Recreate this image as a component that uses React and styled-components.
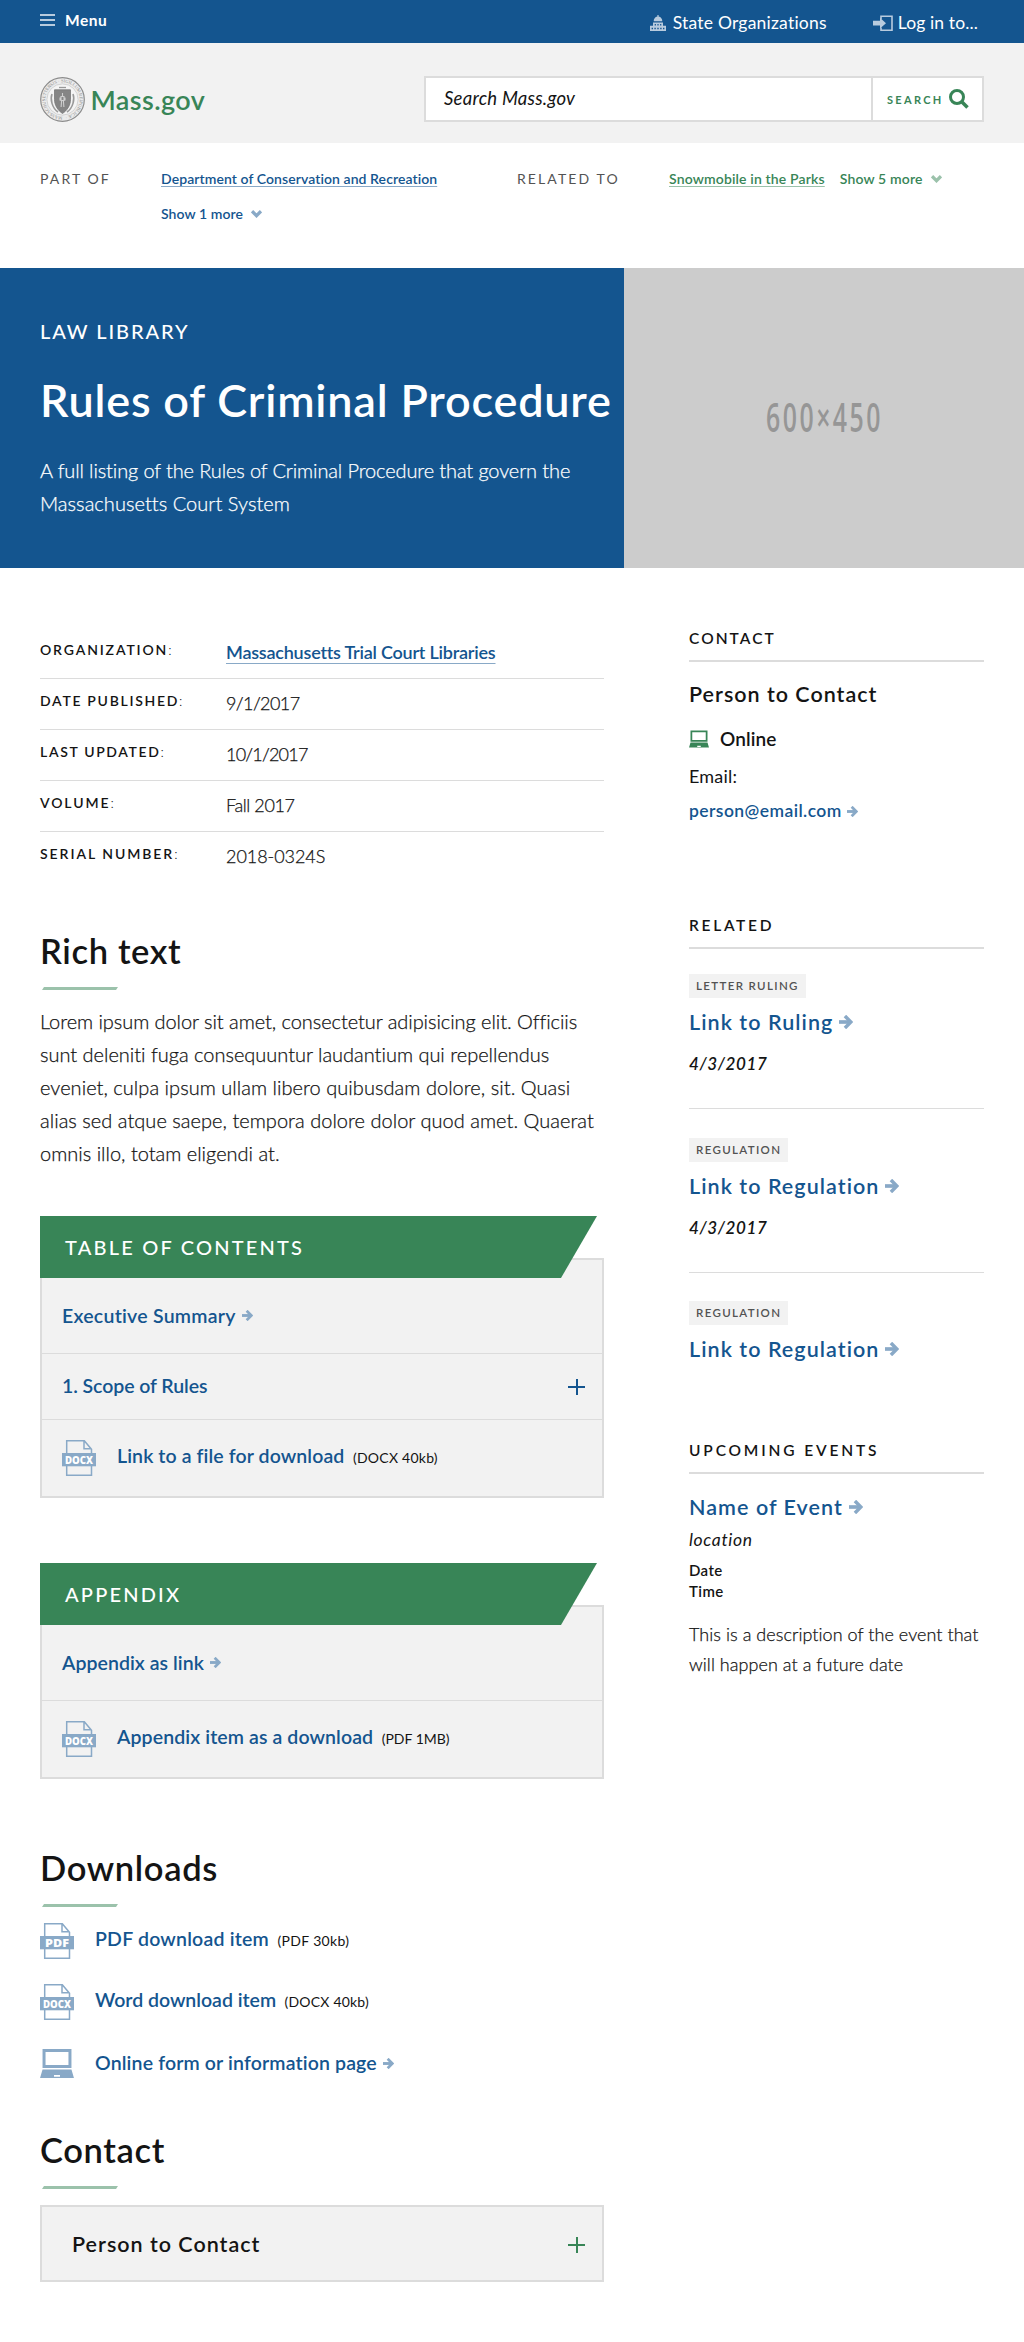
import React from "react";
import styled, { createGlobalStyle, css } from "styled-components";

const C = { blue: "#14558f", green: "#388557", ink: "#141414", gray: "#535353", line: "#dcdcdc", pale: "#f2f2f2", softBlue: "#89a9c7", softGreen: "#9bc2ab", onBlue: "#b8cbde" };

const Global = createGlobalStyle`
  * { box-sizing: border-box; }
  body { margin: 0; background: #fff; color: ${C.ink}; font-family: Lato, "Open Sans", sans-serif; font-variant-ligatures: none; }
  h1, h2, h3, p, dl, dt, dd { margin: 0; font-weight: inherit; }
  a { color: inherit; text-decoration: none; white-space: nowrap; }
  svg { display: block; flex: none; }
`;

const tracking = css`letter-spacing: ${(p) => p.$ls || 0}px;`;
const light = css`font-weight: 300; -webkit-text-stroke: 0.25px currentColor;`;

const TopBar = styled.div`
  display: flex; justify-content: space-between; align-items: flex-start;
  height: 43px; padding: 0 46px 0 40px; background: ${C.blue}; color: #fff;
`;
const MenuButton = styled.div`
  display: flex; align-items: center; gap: 10px; padding-top: 10px;
  font-size: 15.5px; line-height: 20px; font-weight: 700; letter-spacing: 0.5px;
`;
const Burger = styled.span`
  width: 15px; height: 12px; border-top: 2px solid ${C.onBlue}; border-bottom: 2px solid ${C.onBlue};
  display: flex; flex-direction: column; justify-content: center;
  &::after { content: ""; height: 2px; background: ${C.onBlue}; }
`;
const Utilities = styled.div`display: flex; gap: 46px; padding-top: 13px;`;
const Utility = styled.a`
  display: flex; align-items: center; gap: ${(p) => p.$gap}px; font-size: 17.5px; line-height: 20px; ${tracking}
`;

const Header = styled.header`
  display: flex; justify-content: space-between; align-items: flex-start;
  height: 100px; padding: 33px 40px 0; background: ${C.pale};
`;
const Logo = styled.a`display: flex; align-items: flex-start; gap: 5.5px; margin-top: 1px; color: ${C.green};`;
const LogoText = styled.span`margin-top: 7.5px; font-size: 27px; line-height: 30px; font-weight: 600; letter-spacing: 0.4px;`;
const Search = styled.div`display: flex; width: 560px; height: 46px; border: 2px solid ${C.line}; background: #fff;`;
const SearchField = styled.div`
  flex: 1; display: flex; align-items: center; padding: 0 0 2px 18px;
  font-size: 18.5px; font-style: italic; letter-spacing: 0.25px;
`;
const SearchButton = styled.div`
  display: flex; align-items: center; gap: 5px; width: 111px; padding-left: 14px; border-left: 2px solid ${C.line};
  color: ${C.green}; font-size: 11px; font-weight: 700; letter-spacing: 2.3px;
`;

const Relations = styled.div`display: flex; height: 125px; padding: 18px 40px 0; line-height: 35px;`;
const RelationGroup = styled.div`display: flex; width: ${(p) => p.$w}px; color: ${(p) => p.$color};`;
const RelationLabel = styled.div`width: ${(p) => p.$w}px; color: ${C.gray}; font-size: 14px; letter-spacing: 2.1px;`;
const RelationLinks = styled.div`
  display: flex; align-items: flex-start; flex-direction: ${(p) => (p.$stack ? "column" : "row")}; gap: ${(p) => (p.$stack ? 0 : 15)}px;
  font-size: 14px; font-weight: 600; ${tracking}
`;
const Underlined = styled.a`
  text-decoration: underline 1px ${(p) => p.$line}; text-underline-offset: ${(p) => p.$offset}px;
  text-decoration-skip-ink: none;
`;
const ShowMore = styled.a`display: flex; align-items: center; gap: 8px;`;

const Hero = styled.section`display: flex; height: 300px;`;
const HeroText = styled.div`width: 624px; padding: 50px 0 0 40px; background: ${C.blue}; color: #fff;`;
const Eyebrow = styled.div`font-size: 20px; line-height: 26px; font-weight: 500; letter-spacing: 1.9px;`;
const Title = styled.h1`margin-top: 29px; font-size: 45px; line-height: 54px; font-weight: 600; white-space: nowrap; letter-spacing: 0.8px;`;
const HeroCopy = styled.p`margin-top: 27px; font-size: 20px; line-height: 33px; ${light}`;
const TextLine = styled.span`display: block; white-space: nowrap; ${tracking}`;
const HeroImage = styled.div`flex: 1; display: flex; align-items: center; justify-content: center; background: #ccc;`;

const Columns = styled.main`display: flex; gap: 85px; padding: 0 40px 60px;`;
const Content = styled.div`width: 564px; padding-top: 60px;`;
const Sidebar = styled.aside`width: 295px; padding-top: 58px;`;

const DetailRow = styled.div`
  display: flex; height: 51px; padding-top: 12px; border-bottom: 1px solid ${C.line};
  &:last-child { border-bottom: 0; }
`;
const DetailLabel = styled.dt`width: 186px; font-size: 14px; line-height: 20px; font-weight: 600; ${tracking}`;
const Colon = styled.span`font-weight: 300;`;
const DetailValue = styled.dd`
  font-size: 18px; line-height: 24px; ${tracking}
  ${(p) => (p.$link ? css`font-weight: 600; color: ${C.blue};` : light)}
`;

const Heading = styled.h2`
  margin-top: ${(p) => p.$mt}px; font-size: 34.5px; line-height: 41px; font-weight: 600; letter-spacing: 0.65px;
  &::after {
    content: ""; display: block; width: 76px; height: 3px; margin: 16px 0 0 2px; background: ${C.softGreen};
    clip-path: polygon(2px 0, 100% 0, calc(100% - 2px) 100%, 0 100%);
  }
`;
const Paragraph = styled.p`margin-top: 15px; font-size: 20px; line-height: 33px; ${light}`;

const Panel = styled.section`margin-top: ${(p) => p.$mt}px;`;
const PanelTitle = styled.h3`
  position: relative; width: 557px; height: 62px; padding-left: 25px; margin-bottom: -20px; background: ${C.green}; color: #fff;
  font-size: 20px; line-height: 63px; letter-spacing: 2.2px; font-weight: 500;
  clip-path: polygon(0 0, 100% 0, 521px 100%, 0 100%);
`;
const PanelBody = styled.div`border: 2px solid ${C.line}; background: ${C.pale}; padding-top: 18px;`;
const PanelRow = styled.div`
  display: flex; align-items: center; height: ${(p) => p.$h}px; padding: 0 17px 0 20px; border-bottom: 1px solid ${C.line};
  &:last-child { border-bottom: 0; }
`;
const RowLink = styled.a`
  display: flex; align-items: center; gap: 6px; margin-top: ${(p) => p.$shift || 0}px;
  color: ${C.blue}; font-size: 19.5px; line-height: 24px; font-weight: 600; ${tracking}
`;
const FileSize = styled.span`margin-left: 8.5px; font-size: 14px; line-height: 24px; ${tracking}`;
const IconSlot = styled.div`width: 55px; display: flex;`;
const PlusMark = styled.i`
  width: 17px; height: 16px; margin-left: auto; margin-top: ${(p) => p.$shift || 0}px;
  background: linear-gradient(${(p) => p.$color} 0 0) center / 100% 2px no-repeat, linear-gradient(${(p) => p.$color} 0 0) center / 2px 100% no-repeat;
`;
const Downloads = styled.div`display: flex; flex-direction: column; gap: 25px; margin-top: 16px;`;
const DownloadRow = styled.div`display: flex; align-items: center; height: 36px;`;
const ContactBox = styled.div`
  display: flex; align-items: center; height: 77px; margin-top: 16px; padding: 0 17px 0 30px;
  border: 2px solid ${C.line}; background: ${C.pale};
`;
const PersonName = styled.h3`margin-top: ${(p) => p.$mt || 0}px; font-size: 21.5px; line-height: 26px; font-weight: 600; letter-spacing: 1px;`;

const SideHeading = styled.h2`
  margin-top: ${(p) => p.$mt || 0}px; padding-bottom: 10px; border-bottom: 2px solid ${C.line};
  font-size: 15.5px; line-height: 24px; font-weight: 600; ${tracking}
`;
const Channel = styled.div`display: flex; align-items: center; gap: 11px; margin-top: 20px; font-size: 19px; line-height: 24px; font-weight: 600; letter-spacing: 0.1px;`;
const FieldName = styled.div`margin-top: 13px; font-size: 18px; line-height: 24px; letter-spacing: 0.2px;`;
const EmailLink = styled.a`
  display: flex; align-items: center; gap: 5px; margin-top: 11px; color: ${C.blue};
  font-size: 17.5px; line-height: 24px; font-weight: 600; letter-spacing: 0.43px;
`;
const RelatedItem = styled.div`
  padding-bottom: 32px; border-bottom: 1px solid ${C.line}; margin-top: ${(p) => p.$mt}px;
  &:last-of-type { padding-bottom: 0; border-bottom: 0; }
`;
const Tag = styled.span`
  display: block; width: fit-content; height: 24px; padding: 0 7px; background: ${C.pale}; color: ${C.gray};
  font-size: 11.5px; line-height: 24px; font-weight: 600; letter-spacing: 1.35px;
`;
const SideLink = styled.a`
  display: flex; align-items: center; gap: 6px; margin-top: ${(p) => p.$mt || 11}px; color: ${C.blue};
  font-size: 21.5px; line-height: 26px; font-weight: 600; letter-spacing: 1.05px;
`;
const ItemDate = styled.div`margin-top: 17px; font-size: 17px; line-height: 24px; font-weight: 600; font-style: italic; letter-spacing: 0.6px;`;
const Place = styled.div`margin-top: 8px; font-size: 17.5px; line-height: 24px; font-style: italic; font-weight: 400; letter-spacing: 0.65px;`;
const When = styled.div`margin-top: 8px; font-size: 15px; line-height: 21px; font-weight: 600; letter-spacing: 0.4px;`;
const EventCopy = styled.p`margin-top: 17px; font-size: 18px; line-height: 30px; letter-spacing: 0.05px; ${light}`;

const Arrow = ({ size = 11 }) => (
  <svg width={size} height={size} viewBox="0 0 13 13" fill="none" stroke={C.softBlue}>
    <path d="M0 6.5H10.5" strokeWidth="3.4" />
    <path d="M5.5 .9 11 6.5 5.5 12.1" strokeWidth="3.2" />
  </svg>
);
const Chevron = ({ color }) => (
  <svg width="11" height="8" viewBox="0 0 11 8" fill="none" stroke={color} strokeWidth="3.3"><path d="M1 1.2 5.5 5.7 10 1.2" /></svg>
);
const Capitol = () => (
  <svg width="16" height="17" viewBox="0 0 16 17" fill={C.onBlue}>
    <path d="M7.4 0h1.2v1.6C11 2 12.3 4 12.3 6.2H3.7C3.7 4 5 2 7.4 1.6z" />
    <path fillRule="evenodd" d="M3 7.6h10v3.2h3V16H0v-5.2h3zM4.7 9v1.6h1.2V9zm2.7 0v1.6h1.2V9zm2.7 0v1.6h1.2V9zM1.6 12.8v1.5h1.4v-1.5zm2.8 0v1.5h1.4v-1.5zm2.9 0v1.5h1.4v-1.5zm2.9 0v1.5h1.4v-1.5zm2.8 0v1.5h1.4v-1.5z" />
  </svg>
);
const LoginIcon = () => (
  <svg width="20" height="17" viewBox="0 0 20 17">
    <path d="M8 4V1.2H19v14H8v-2.6" fill="none" stroke={C.onBlue} strokeWidth="1.6" />
    <path d="M0 5.8h7V2.8L13 8.2 7 13.6v-3H0z" fill={C.onBlue} />
  </svg>
);
const Magnifier = () => (
  <svg width="20" height="20" viewBox="0 0 20 20" fill="none" stroke={C.green}>
    <circle cx="8" cy="8" r="6.5" strokeWidth="3" /><path d="M12.5 12.5 18.5 18.5" strokeWidth="3.6" />
  </svg>
);
const Laptop = ({ color, width }) => (
  <svg width={width} height={width * 0.88} viewBox="0 0 34 30" fill={color}>
    <path fillRule="evenodd" d="M2.5 1h29v19h-29zM5.500 4v13h23V4z" />
    <path fillRule="evenodd" d="M2.5 21.5h29L34 30H0zM14 27v1.8h6V27z" />
  </svg>
);
const FileIcon = ({ label }) => (
  <svg width="34" height="36" viewBox="0 0 34 36">
    <path d="M4.7 13V.7h17.6l7.2 8.5V13M22 .7v8h7.2M4.7 26v9.3h24.8V26" fill="none" stroke={C.softBlue} strokeWidth="1.5" />
    <rect y="13" width="34" height="13.3" fill={C.softBlue} />
    <text x="17" y="23.5" textAnchor="middle" textLength={label.length > 3 ? 28 : 24} lengthAdjust="spacingAndGlyphs" fill="#fff" fontFamily="Open Sans" fontWeight="800" fontSize="10.8">{label}</text>
  </svg>
);
const Seal = () => (
  <svg width="45" height="45" viewBox="0 0 45 45" fill="none" stroke="#8c8c8c">
    <circle cx="22.5" cy="22.5" r="21.8" strokeWidth="1.2" fill="#ebebeb" />
    <circle cx="22.5" cy="22.5" r="15.6" strokeWidth=".5" stroke="#b5b5b5" fill="#f4f4f4" />
    <path id="ring" d="M22.5 39.7A17.2 17.2 0 1 1 22.51 39.7" stroke="none" />
    <text fontSize="4.6" fill="#8c8c8c" stroke="none" fontFamily="Liberation Serif"><textPath href="#ring" textLength="105">MASSACHUSETTENSIS · SIGILLUM REIPUBLICÆ ·</textPath></text>
    <path d="M14.5 12.8h16v9.7c0 6-3.5 11-8 14-4.5-3-8-8-8-14z" fill="#858585" stroke="#777" strokeWidth=".8" />
    <path d="M22.5 16v3M21 19.5h3v4h-3zM21.6 24l-.5 6M23.4 24l.5 6M20 20.500v3M25 20.500v3" stroke="#cfcfcf" strokeWidth="1.1" />
    <path d="M12 17c-2 5 0 14 6 18M33 17c2 5 0 14-6 18" strokeWidth="1.6" stroke="#999" />
    <path d="M19 10.5h7" strokeWidth="1.3" stroke="#999" />
  </svg>
);

const details = [
  { label: "ORGANIZATION", value: "Massachusetts Trial Court Libraries", link: true, ls: -0.22, track: 1.85 },
  { label: "DATE PUBLISHED", value: "9/1/2017", ls: -0.6, track: 1.7 },
  { label: "LAST UPDATED", value: "10/1/2017", ls: -0.8, track: 1.65 },
  { label: "VOLUME", value: "Fall 2017", ls: -0.4, track: 1.9 },
  { label: "SERIAL NUMBER", value: "2018-0324S", ls: -0.05, track: 1.95 },
];

const paragraph = [
  ["Lorem ipsum dolor sit amet, consectetur adipisicing elit. Officiis", -0.06],
  ["sunt deleniti fuga consequuntur laudantium qui repellendus", -0.01],
  ["eveniet, culpa ipsum ullam libero quibusdam dolore, sit. Quasi", 0.04],
  ["alias sed atque saepe, tempora dolore dolor quod amet. Quaerat", 0.03],
  ["omnis illo, totam eligendi at.", 0],
];

export default function App() {
  return (
    <>
      <Global />
      <TopBar>
        <MenuButton><Burger />Menu</MenuButton>
        <Utilities>
          <Utility $gap={7} $ls={0.22}><Capitol />State Organizations</Utility>
          <Utility $gap={5} $ls={0.12}><LoginIcon />Log in to...</Utility>
        </Utilities>
      </TopBar>
      <Header>
        <Logo><Seal /><LogoText>Mass.gov</LogoText></Logo>
        <Search>
          <SearchField>Search Mass.gov</SearchField>
          <SearchButton>SEARCH<Magnifier /></SearchButton>
        </Search>
      </Header>
      <Relations>
        <RelationGroup $w={477} $color={C.blue}>
          <RelationLabel $w={121}>PART OF</RelationLabel>
          <RelationLinks $stack $ls={0.08}>
            <Underlined $line={C.softBlue} $offset={2}>Department of Conservation and Recreation</Underlined>
            <ShowMore>Show 1 more<Chevron color={C.softBlue} /></ShowMore>
          </RelationLinks>
        </RelationGroup>
        <RelationGroup $color={C.green}>
          <RelationLabel $w={152}>RELATED TO</RelationLabel>
          <RelationLinks $ls={0.15}>
            <Underlined $line={C.softGreen} $offset={2}>Snowmobile in the Parks</Underlined>
            <ShowMore>Show 5 more<Chevron color={C.softGreen} /></ShowMore>
          </RelationLinks>
        </RelationGroup>
      </Relations>
      <Hero>
        <HeroText>
          <Eyebrow>LAW LIBRARY</Eyebrow>
          <Title>Rules of Criminal Procedure</Title>
          <HeroCopy>
            <TextLine $ls={-0.12}>A full listing of the Rules of Criminal Procedure that govern the</TextLine>
            <TextLine $ls={0.04}>Massachusetts Court System</TextLine>
          </HeroCopy>
        </HeroText>
        <HeroImage>
          <svg width="400" height="300" viewBox="0 0 400 300">
            <text x="142" y="163.5" textLength="117" lengthAdjust="spacingAndGlyphs" fontFamily="Open Sans" fontWeight="600" fontSize="39.5" letterSpacing="4" fill="#969696">600×450</text>
          </svg>
        </HeroImage>
      </Hero>
      <Columns>
        <Content>
          <dl>
            {details.map(({ label, value, link, ls, track }) => (
              <DetailRow key={label}>
                <DetailLabel $ls={track}>{label}<Colon>:</Colon></DetailLabel>
                <DetailValue $link={link} $ls={ls}>{link ? <Underlined $line={C.softBlue} $offset={4}>{value}</Underlined> : value}</DetailValue>
              </DetailRow>
            ))}
          </dl>
          <Heading $mt={47}>Rich text</Heading>
          <Paragraph>{paragraph.map(([line, ls]) => <TextLine key={line} $ls={ls}>{line} </TextLine>)}</Paragraph>
          <Panel $mt={46}>
            <PanelTitle>TABLE OF CONTENTS</PanelTitle>
            <PanelBody>
              <PanelRow $h={76}><RowLink $ls={0.25}>Executive Summary<Arrow /></RowLink></PanelRow>
              <PanelRow $h={66}><RowLink $shift={-1} $ls={-0.08}>1. Scope of Rules</RowLink><PlusMark $color={C.blue} /></PanelRow>
              <PanelRow $h={76}>
                <IconSlot><FileIcon label="DOCX" /></IconSlot>
                <RowLink $shift={-4} $ls={0.1}>Link to a file for download</RowLink><FileSize $ls={0.25}>(DOCX 40kb)</FileSize>
              </PanelRow>
            </PanelBody>
          </Panel>
          <Panel $mt={65}>
            <PanelTitle>APPENDIX</PanelTitle>
            <PanelBody>
              <PanelRow $h={76}><RowLink $ls={0.05}>Appendix as link<Arrow /></RowLink></PanelRow>
              <PanelRow $h={76}>
                <IconSlot><FileIcon label="DOCX" /></IconSlot>
                <RowLink $shift={-4} $ls={0.1}>Appendix item as a download</RowLink><FileSize>(PDF 1MB)</FileSize>
              </PanelRow>
            </PanelBody>
          </Panel>
          <Heading $mt={68}>Downloads</Heading>
          <Downloads>
            <DownloadRow><IconSlot><FileIcon label="PDF" /></IconSlot><RowLink $shift={-5} $ls={0.2}>PDF download item</RowLink><FileSize $ls={0.35}>(PDF 30kb)</FileSize></DownloadRow>
            <DownloadRow><IconSlot><FileIcon label="DOCX" /></IconSlot><RowLink $shift={-5} $ls={-0.02}>Word download item</RowLink><FileSize $ls={0.2}>(DOCX 40kb)</FileSize></DownloadRow>
            <DownloadRow><IconSlot><Laptop color={C.softBlue} width={34} /></IconSlot><RowLink $ls={0.14}>Online form or information page<Arrow /></RowLink></DownloadRow>
          </Downloads>
          <Heading $mt={48}>Contact</Heading>
          <ContactBox><PersonName>Person to Contact</PersonName><PlusMark $color={C.green} $shift={2} /></ContactBox>
        </Content>
        <Sidebar>
          <SideHeading $ls={2.05}>CONTACT</SideHeading>
          <PersonName $mt={19}>Person to Contact</PersonName>
          <Channel><Laptop color={C.green} width={20} />Online</Channel>
          <FieldName>Email:</FieldName>
          <EmailLink>person@email.com<Arrow size={11} /></EmailLink>
          <SideHeading $mt={90} $ls={2.7}>RELATED</SideHeading>
          <section>
            <RelatedItem $mt={25}><Tag>LETTER RULING</Tag><SideLink>Link to Ruling<Arrow size={14} /></SideLink><ItemDate>4/3/2017</ItemDate></RelatedItem>
            <RelatedItem $mt={29}><Tag>REGULATION</Tag><SideLink>Link to Regulation<Arrow size={14} /></SideLink><ItemDate>4/3/2017</ItemDate></RelatedItem>
            <RelatedItem $mt={28}><Tag>REGULATION</Tag><SideLink>Link to Regulation<Arrow size={14} /></SideLink></RelatedItem>
          </section>
          <SideHeading $mt={76} $ls={2.85}>UPCOMING EVENTS</SideHeading>
          <SideLink $mt={20}>Name of Event<Arrow size={14} /></SideLink>
          <Place>location</Place>
          <When>Date<br />Time</When>
          <EventCopy>This is a description of the event that<br />will happen at a future date</EventCopy>
        </Sidebar>
      </Columns>
    </>
  );
}
